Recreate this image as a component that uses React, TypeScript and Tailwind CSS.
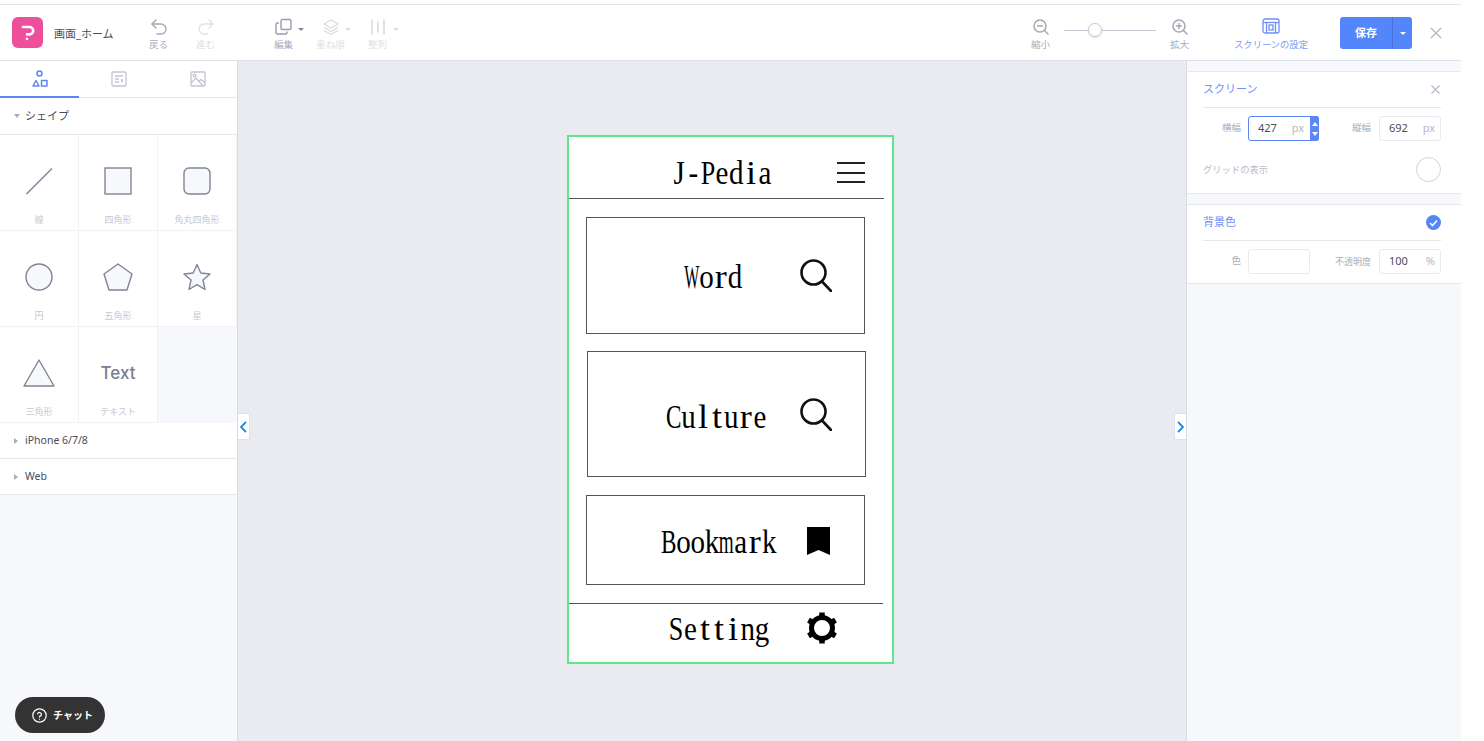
import React from "react";

const FONT = "[font-family:'Noto_Sans','Noto_Sans_CJK_JP',sans-serif]";

function Tool({ label, children, dim, caret }: { label: string; children: React.ReactNode; dim?: boolean; caret?: boolean }) {
  return (
    <div className="w-[47px] flex flex-col items-center pt-[12px]">
      <div className="h-[20px] flex items-center relative">
        {children}
        {caret && <span className={`absolute left-[23px] top-[11px] w-0 h-0 border-x-[3px] border-x-transparent border-t-[3px] ${dim ? "border-t-[#d8dbe3]" : "border-t-[#7f8595]"}`} />}
      </div>
      <span className={`text-[9.5px] leading-[14px] mt-[1px] whitespace-nowrap ${dim ? "text-[#dcdfe6]" : "text-[#a9aebb]"}`}>{label}</span>
    </div>
  );
}

function ShapeCell({ label, children, empty }: { label?: string; children?: React.ReactNode; empty?: boolean }) {
  if (empty) return <div className="bg-[#f7f8fc]" />;
  return (
    <div className="bg-white border-r border-b border-[#f1f2f6] flex flex-col items-center">
      <div className="h-[78px] w-full flex items-end justify-center pb-[18px]">{children}</div>
      <span className="text-[9px] leading-[14px] text-[#c6cad4] whitespace-nowrap">{label}</span>
    </div>
  );
}

function Row({ label }: { label: string }) {
  return (
    <div className="h-[36px] bg-white border-b border-[#e6e8ee] flex items-center pl-[14px]">
      <span className="w-0 h-0 border-y-[3px] border-y-transparent border-l-[4px] border-l-[#a9aebb]" />
      <span className="ml-[7px] text-[10.5px] text-[#4a4d57]">{label}</span>
    </div>
  );
}

function NumInput({ value, unit, active, w = "w-[62px]" }: { value: string; unit: string; active?: boolean; w?: string }) {
  return (
    <div className={`${w} h-[25px] rounded-[3px] border flex items-center pl-[9px] pr-[5px] bg-white ${active ? "border-[#5b86f7]" : "border-[#e8eaf0]"} relative`}>
      <span className="text-[11px] text-[#4a4d57]">{value}</span>
      <span className="ml-auto text-[11px] text-[#b4b8c4]">{unit}</span>
    </div>
  );
}

function squeeze(ch: string) {
  if (ch === "W") return "scale-x-[0.55]";
  if (ch === "m") return "scale-x-[0.66]";
  if (ch === "B" || ch === "C") return "scale-x-[0.8]";
  if (ch === "P" || ch === "S") return "scale-x-[0.9]";
  if (ch === "t" || ch === "i" || ch === "l" || ch === "r") return "scale-x-[1.25]";
  return "";
}

function PhoneText({ children, x, y }: { children: string; x: number; y: number }) {
  return (
    <span
      className="absolute flex text-[29px] leading-[28px] text-black [font-family:'Liberation_Serif',serif] scale-y-[1.17] whitespace-nowrap"
      style={{ left: x, top: y }}
    >
      {children.split("").map((ch, i) => (
        <span key={i} className="w-[14.3px] flex justify-center">
          <span className={`inline-block ${squeeze(ch)}`}>{ch}</span>
        </span>
      ))}
    </span>
  );
}

function MockBox({ x, y, w, h }: { x: number; y: number; w: number; h: number }) {
  return <div className="absolute border border-[#555]" style={{ left: x, top: y, width: w, height: h }} />;
}

function Search({ x, y }: { x: number; y: number }) {
  return (
    <svg className="absolute" style={{ left: x, top: y }} width="32" height="33" viewBox="0 0 32 33" fill="none" stroke="#111" strokeWidth="2.6" strokeLinecap="round">
      <circle cx="13.5" cy="13.5" r="12" />
      <path d="M22 22.5 L31 32" />
    </svg>
  );
}

export default function App() {
  return (
    <div className={`w-[1484px] h-[741px] bg-white overflow-hidden ${FONT}`}>
      <div className="w-[1461px] h-full flex flex-col relative">
        <div className="h-[5px] border-b border-[#e4e6ea] bg-white shrink-0" />
        {/* Header */}
        <div className="h-[56px] shrink-0 border-b border-[#dfe1e8] flex items-start bg-white">
          <div className="ml-[12px] mt-[12px] w-[31px] h-[31px] rounded-[6px] bg-[#ee4f9b] flex items-center justify-center">
            <svg width="14" height="16" viewBox="0 0 14 16" fill="none" stroke="#fff" strokeWidth="2.6" strokeLinecap="round" strokeLinejoin="round">
              <path d="M2 2 H8.5 A3.7 3.7 0 0 1 8.5 9.4 H6" />
              <path d="M6 13.8 V14" />
            </svg>
          </div>
          <span className="ml-[11px] mt-[20px] w-[81px] text-[11px] leading-[18px] text-[#4a4d57]">画面_ホーム</span>
          <Tool label="戻る">
            <svg width="18" height="18" viewBox="0 0 18 18" fill="none" stroke="#a3a8b5" strokeWidth="1.4" strokeLinecap="round" strokeLinejoin="round"><path d="M6 2 L2 6 L6 10" /><path d="M2 6 H11 A5 5 0 0 1 11 16 H7" /></svg>
          </Tool>
          <Tool label="進む" dim>
            <svg width="18" height="18" viewBox="0 0 18 18" fill="none" stroke="#dfe2e8" strokeWidth="1.4" strokeLinecap="round" strokeLinejoin="round"><path d="M12 2 L16 6 L12 10" /><path d="M16 6 H7 A5 5 0 0 0 7 16 H11" /></svg>
          </Tool>
          <div className="w-[31px]" />
          <Tool label="編集" caret>
            <svg width="18" height="18" viewBox="0 0 18 18" fill="none" stroke="#989dab" strokeWidth="1.4"><rect x="6" y="1.5" width="10" height="10" rx="1.5" /><path d="M3.5 5 H2.5 A1.5 1.5 0 0 0 1 6.5 V14.5 A1.5 1.5 0 0 0 2.5 16 H10.5 A1.5 1.5 0 0 0 12 14.5 V14" strokeLinecap="round" /></svg>
          </Tool>
          <Tool label="重ね順" dim caret>
            <svg width="18" height="18" viewBox="0 0 18 18" fill="none" stroke="#d8dbe3" strokeWidth="1.4" strokeLinejoin="round"><path d="M9 2 L16 6 L9 10 L2 6 Z" /><path d="M2 9.5 L9 13.5 L16 9.5" /><path d="M2 12.5 L9 16.5 L16 12.5" /></svg>
          </Tool>
          <Tool label="整列" dim caret>
            <svg width="16" height="18" viewBox="0 0 16 18" fill="none" stroke="#d8dbe3" strokeWidth="1.6" strokeLinecap="round"><path d="M2 2 V16" /><path d="M8 4 V14" /><path d="M14 2 V16" /></svg>
          </Tool>

          <div className="ml-auto flex items-start">
            <Tool label="縮小">
              <svg width="18" height="18" viewBox="0 0 18 18" fill="none" stroke="#a3a8b5" strokeWidth="1.5" strokeLinecap="round"><circle cx="8" cy="8" r="6" /><path d="M5.5 8 H10.5" /><path d="M12.5 12.5 L16 16" /></svg>
            </Tool>
            <div className="w-[92px] h-[14px] mt-[18px] flex items-center relative">
              <div className="w-full h-px bg-[#c6cad4]" />
              <div className="absolute left-[24px] top-0 w-[14px] h-[14px] rounded-full bg-white border border-[#c6cad4] shadow-sm" />
            </div>
            <Tool label="拡大">
              <svg width="18" height="18" viewBox="0 0 18 18" fill="none" stroke="#a3a8b5" strokeWidth="1.5" strokeLinecap="round"><circle cx="8" cy="8" r="6" /><path d="M5.5 8 H10.5 M8 5.5 V10.5" /><path d="M12.5 12.5 L16 16" /></svg>
            </Tool>
            <div className="w-[74px] ml-[31px] flex flex-col items-center pt-[11px]">
              <div className="h-[20px] flex items-center">
                <svg width="18" height="16" viewBox="0 0 18 16" fill="none" stroke="#6f90f5" strokeWidth="1.3"><rect x="1" y="1" width="16" height="14" rx="2" /><path d="M1 4.5 H17" /><path d="M4.5 4.5 V15 M13.5 4.5 V15" /><rect x="7" y="7" width="4" height="5" /></svg>
              </div>
              <span className="text-[9.3px] leading-[14px] mt-[2px] text-[#7d9bf6] whitespace-nowrap">スクリーンの設定</span>
            </div>
            <div className="ml-[32px] mt-[12px] w-[72px] h-[32px] rounded-[3px] bg-[#5385fb] flex items-center text-white">
              <span className="w-[52px] text-center text-[11px] font-bold">保存</span>
              <div className="w-[20px] h-full border-l border-[#4670d8] flex items-center justify-center">
                <span className="w-0 h-0 border-x-[3px] border-x-transparent border-t-[3px] border-t-white" />
              </div>
            </div>
            <div className="w-[49px] h-[32px] mt-[12px] flex items-center justify-end pr-[19px]">
              <svg width="12" height="12" viewBox="0 0 12 12" stroke="#b4b8c4" strokeWidth="1.3"><path d="M1 1 L11 11 M11 1 L1 11" /></svg>
            </div>
          </div>
        </div>

        {/* Main */}
        <div className="flex-1 flex min-h-0">
          {/* Left panel */}
          <div className="w-[238px] shrink-0 bg-[#f7f8fc] border-r border-[#d9dbe3] flex flex-col">
            <div className="h-[37px] bg-white border-b border-[#e6e8ee] flex">
              <div className="w-[79px] h-[37px] border-b-2 border-[#5b86f7] flex items-center justify-center">
                <svg width="16" height="18" viewBox="0 0 16 18" fill="none" stroke="#5b86f7" strokeWidth="1.5" strokeLinejoin="round"><circle cx="7.5" cy="3.5" r="2.5" /><path d="M1 16 L4 10.5 L7 16 Z" /><rect x="9.5" y="10.5" width="5.5" height="5.5" /></svg>
              </div>
              <div className="w-[79px] flex items-center justify-center">
                <svg width="16" height="16" viewBox="0 0 16 16" fill="none" stroke="#c2c6d1" strokeWidth="1.3"><rect x="1" y="1" width="14" height="14" rx="1" /><path d="M4 5 H12 M4 8 H8 M4 11 H8" /><rect x="10" y="8" width="2" height="3" fill="#c2c6d1" stroke="none" /></svg>
              </div>
              <div className="w-[79px] flex items-center justify-center">
                <svg width="16" height="16" viewBox="0 0 16 16" fill="none" stroke="#c2c6d1" strokeWidth="1.3" strokeLinejoin="round"><rect x="1" y="1" width="14" height="14" rx="1" /><circle cx="4.5" cy="4.5" r="1.3" /><path d="M1 12 L6 7 L13 15" /><path d="M9 10 L11 8.5 L15 12" /></svg>
              </div>
            </div>
            <div className="h-[37px] bg-white border-b border-[#e6e8ee] flex items-center pl-[14px]">
              <span className="w-0 h-0 border-x-[3px] border-x-transparent border-t-[4px] border-t-[#a9aebb]" />
              <span className="ml-[5px] text-[11px] text-[#4a4d57]">シェイプ</span>
            </div>
            <div className="grid grid-cols-3 auto-rows-[96px]">
              <ShapeCell label="線">
                <svg width="28" height="28" viewBox="0 0 28 28" stroke="#7f8595" strokeWidth="1.4"><path d="M1.5 27 L27 1.5" /></svg>
              </ShapeCell>
              <ShapeCell label="四角形">
                <svg width="28" height="28" viewBox="0 0 28 28" fill="#f7f8fc" stroke="#7f8595" strokeWidth="1.4"><rect x="1" y="1" width="26" height="26" /></svg>
              </ShapeCell>
              <ShapeCell label="角丸四角形">
                <svg width="28" height="28" viewBox="0 0 28 28" fill="#f7f8fc" stroke="#7f8595" strokeWidth="1.4"><rect x="1" y="1" width="26" height="26" rx="5" /></svg>
              </ShapeCell>
              <ShapeCell label="円">
                <svg width="28" height="28" viewBox="0 0 28 28" fill="#f7f8fc" stroke="#7f8595" strokeWidth="1.4"><circle cx="14" cy="14" r="13" /></svg>
              </ShapeCell>
              <ShapeCell label="五角形">
                <svg width="30" height="28" viewBox="0 0 30 28" fill="#f7f8fc" stroke="#7f8595" strokeWidth="1.4" strokeLinejoin="round"><path d="M15 1 L29 11 L24 27 L6 27 L1 11 Z" /></svg>
              </ShapeCell>
              <ShapeCell label="星">
                <svg width="28" height="28" viewBox="0 0 28 28" fill="#f7f8fc" stroke="#7f8595" strokeWidth="1.4" strokeLinejoin="round"><path d="M14 1.5 L17.8 10 L27 11 L20 17 L22 26.5 L14 21.7 L6 26.5 L8 17 L1 11 L10.2 10 Z" /></svg>
              </ShapeCell>
              <ShapeCell label="三角形">
                <svg width="32" height="28" viewBox="0 0 32 28" fill="#f7f8fc" stroke="#7f8595" strokeWidth="1.4" strokeLinejoin="round"><path d="M16 1 L31 27 L1 27 Z" /></svg>
              </ShapeCell>
              <ShapeCell label="テキスト">
                <span className="text-[17px] leading-[28px] font-medium text-[#7a7f8e] [font-family:Inter,sans-serif]">Text</span>
              </ShapeCell>
              <ShapeCell empty />
            </div>
            <Row label="iPhone 6/7/8" />
            <Row label="Web" />
          </div>

          {/* Canvas */}
          <div className="flex-1 bg-[#e9ebf1] relative min-w-0">
            <div className="absolute left-0 top-[352px] w-[12px] h-[27px] bg-white border border-l-0 border-[#e1e3ea] flex items-center justify-center">
              <svg width="7" height="12" viewBox="0 0 7 12" fill="none" stroke="#1f8ae8" strokeWidth="1.8"><path d="M6 1 L1 6 L6 11" /></svg>
            </div>
            <div className="absolute right-0 top-[352px] w-[12px] h-[27px] bg-white border border-r-0 border-[#e1e3ea] flex items-center justify-center">
              <svg width="7" height="12" viewBox="0 0 7 12" fill="none" stroke="#1f8ae8" strokeWidth="1.8"><path d="M1 1 L6 6 L1 11" /></svg>
            </div>

            {/* Phone mock: free canvas */}
            <div className="absolute left-[329px] top-[74px] w-[327px] h-[529px] bg-white border-2 border-[#5de78b]">
              <PhoneText x={103} y={21}>J-Pedia</PhoneText>
              <div className="absolute left-[268px] top-[25px] w-[28px] h-[21px] border-y-2 border-[#222] flex items-center">
                <div className="w-full h-[2px] bg-[#222]" />
              </div>
              <div className="absolute left-0 top-[61px] w-[315px] h-px bg-[#555]" />
              <MockBox x={17} y={80} w={279} h={117} />
              <PhoneText x={116} y={125}>Word</PhoneText>
              <Search x={231} y={122} />
              <MockBox x={18} y={214} w={279} h={126} />
              <PhoneText x={98} y={265}>Culture</PhoneText>
              <Search x={231} y={261} />
              <MockBox x={17} y={358} w={279} h={90} />
              <PhoneText x={93} y={390}>Bookmark</PhoneText>
              <svg className="absolute left-[238px] top-[390px]" width="23" height="28" viewBox="0 0 23 28" fill="#000"><path d="M0 0 H23 V28 L11.5 23 L0 28 Z" /></svg>
              <div className="absolute left-0 top-[466px] w-[314px] h-px bg-[#555]" />
              <PhoneText x={100} y={477}>Setting</PhoneText>
              <svg className="absolute left-[236px] top-[474px]" width="34" height="34" viewBox="0 0 34 34" fill="none" stroke="#000">
                <circle cx="17" cy="17" r="10.5" strokeWidth="5" />
                <path d="M17 1.5 V6 M17 28 V32.5 M3.5 9.2 L7.5 11.5 M26.5 22.5 L30.5 24.8 M3.5 24.8 L7.5 22.5 M26.5 11.5 L30.5 9.2" strokeWidth="5.5" />
              </svg>
            </div>
          </div>

          {/* Right panel */}
          <div className="w-[275px] shrink-0 bg-[#f7f8fc] border-l border-[#d9dbe3] flex flex-col">
            <div className="h-[11px] border-b border-[#e6e8ee]" />
            <div className="h-[122px] bg-white border-b border-[#e6e8ee] pl-[16px] pr-[20px]">
              <div className="h-[36px] border-b border-[#e6e8ee] flex items-center">
                <span className="text-[11px] text-[#6f90f5]">スクリーン</span>
                <svg className="ml-auto mr-[1px]" width="9" height="9" viewBox="0 0 9 9" stroke="#b4b8c4" strokeWidth="1.1"><path d="M0.5 0.5 L8.5 8.5 M8.5 0.5 L0.5 8.5" /></svg>
              </div>
              <div className="mt-[8px] flex items-center">
                <span className="w-[38px] text-right text-[9.5px] text-[#a9aebb]">横幅</span>
                <div className="ml-[7px] relative">
                  <NumInput value="427" unit="px" active w="w-[71px] pr-[14px]" />
                  <div className="absolute right-0 top-0 w-[9px] h-[25px] rounded-r-[3px] bg-[#5b86f7] flex flex-col items-center justify-center gap-[6px]">
                    <span className="w-0 h-0 border-x-[3px] border-x-transparent border-b-[4px] border-b-white" />
                    <span className="w-0 h-0 border-x-[3px] border-x-transparent border-t-[4px] border-t-white" />
                  </div>
                </div>
                <span className="w-[52px] text-right text-[9.5px] text-[#a9aebb]">縦幅</span>
                <div className="ml-[8px]"><NumInput value="692" unit="px" /></div>
              </div>
              <div className="mt-[16px] flex items-center">
                <span className="text-[9.3px] text-[#b9bdc8]">グリッドの表示</span>
                <div className="ml-auto w-[25px] h-[25px] rounded-full border border-[#cfd2dc] bg-white" />
              </div>
            </div>
            <div className="h-[11px] border-b border-[#e6e8ee]" />
            <div className="h-[79px] bg-white border-b border-[#e6e8ee] pl-[16px] pr-[20px]">
              <div className="h-[36px] border-b border-[#e6e8ee] flex items-center">
                <span className="text-[11px] text-[#6f90f5]">背景色</span>
                <div className="ml-auto w-[15px] h-[15px] rounded-full bg-[#5385fb] flex items-center justify-center">
                  <svg width="9" height="8" viewBox="0 0 9 8" fill="none" stroke="#fff" strokeWidth="1.6"><path d="M1 4 L3.5 6.5 L8 1.5" /></svg>
                </div>
              </div>
              <div className="mt-[8px] flex items-center">
                <span className="w-[38px] text-right text-[9.5px] text-[#a9aebb]">色</span>
                <div className="ml-[7px] w-[62px] h-[25px] rounded-[3px] border border-[#e8eaf0]" />
                <span className="w-[61px] text-right text-[9px] text-[#a9aebb]">不透明度</span>
                <div className="ml-[8px]"><NumInput value="100" unit="%" /></div>
              </div>
            </div>
          </div>
        </div>

        {/* Chat button */}
        <div className="absolute left-[15px] top-[697px] w-[90px] h-[36px] rounded-full bg-[#333] flex items-center pl-[17px]">
          <svg width="15" height="15" viewBox="0 0 15 15" fill="none" stroke="#fff" strokeWidth="1.2" strokeLinecap="round"><circle cx="7.5" cy="7.5" r="6.7" /><path d="M5.7 5.8 A1.9 1.9 0 1 1 7.5 8.3 V9" /><path d="M7.5 11 V11.2" /></svg>
          <span className="ml-[6px] text-[10px] font-bold text-white">チャット</span>
        </div>
      </div>
    </div>
  );
}
